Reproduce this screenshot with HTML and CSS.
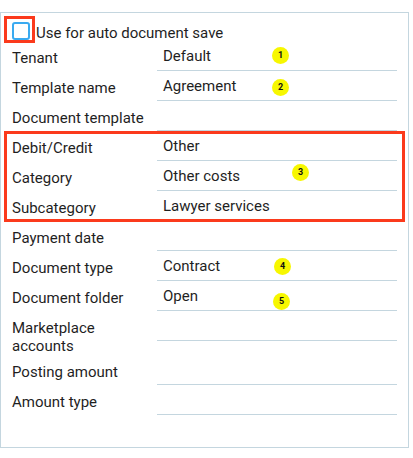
FILE: index.html
```html
<!DOCTYPE html>
<html lang="en">
<head>
<meta charset="utf-8">
<link rel="stylesheet" href="styles.css">
</head>
<body>
<div class="panel">
  <div class="check-row">
    <span class="checkbox"></span>
    <span class="check-label">Use for auto document save</span>
  </div>
  <div class="form">
    <div class="label">Tenant</div><div class="value">Default</div>
    <div class="label">Template name</div><div class="value">Agreement</div>
    <div class="label">Document template</div><div class="value"></div>
    <div class="label">Debit/Credit</div><div class="value">Other</div>
    <div class="label">Category</div><div class="value">Other costs</div>
    <div class="label">Subcategory</div><div class="value">Lawyer services</div>
    <div class="label">Payment date</div><div class="value"></div>
    <div class="label">Document type</div><div class="value">Contract</div>
    <div class="label">Document folder</div><div class="value">Open</div>
    <div class="label">Marketplace<br>accounts</div><div class="value"></div>
    <div class="label">Posting amount</div><div class="value"></div>
    <div class="label">Amount type</div><div class="value"></div>
  </div>

  <div class="mark mark-check"></div>
  <div class="mark mark-group"></div>
  <span class="badge b1">1</span>
  <span class="badge b2">2</span>
  <span class="badge b3">3</span>
  <span class="badge b4">4</span>
  <span class="badge b5">5</span>
</div>
</body>
</html>
```

FILE: styles.css
```css
html, body {
  margin: 0;
  padding: 0;
  background: #ffffff;
}
body {
  font-family: Roboto, "Liberation Sans", Arial, sans-serif;
  font-size: 15px;
  color: #1f1f1f;
}
.panel {
  position: relative;
  box-sizing: border-box;
  width: 409px;
  height: 436px;
  margin-top: 12px;
  border: 1px solid #c4d6df;
  padding: 0 11px;
}
.check-row {
  display: flex;
  align-items: center;
  box-sizing: border-box;
  height: 28px;
  padding-top: 8px;
}
.checkbox {
  box-sizing: border-box;
  flex: none;
  width: 18px;
  height: 18px;
  border: 2px solid #3aaaf0;
  border-radius: 3px;
  background: #fff;
}
.check-label {
  margin-left: 6px;
  margin-top: 3px;
  line-height: 18px;
}
.form {
  display: grid;
  grid-template-columns: 145px 240px;
  align-items: start;
}
.label {
  line-height: 18px;
  padding-top: 8px;
  min-height: 22px;
}
.value {
  box-sizing: border-box;
  height: 30px;
  display: flex;
  align-items: center;
  padding-left: 6px;
  line-height: 18px;
  border-bottom: 1px solid #c4d6df;
}
.mark {
  position: absolute;
  box-sizing: border-box;
  border: 3px solid #fb3a1c;
}
.mark-check {
  left: 3px;
  top: 3px;
  width: 31px;
  height: 27px;
}
.mark-group {
  left: 3px;
  top: 118px;
  width: 401px;
  height: 91px;
}
.badge {
  position: absolute;
  width: 17px;
  height: 17px;
  border-radius: 50%;
  background: #f7f700;
  color: #111;
  font-size: 9px;
  font-weight: bold;
  line-height: 17px;
  text-align: center;
}
.b1 { left: 271px; top: 34px; }
.b2 { left: 271px; top: 66px; }
.b3 { left: 291px; top: 151px; }
.b4 { left: 273px; top: 245px; }
.b5 { left: 272px; top: 280px; }
```
